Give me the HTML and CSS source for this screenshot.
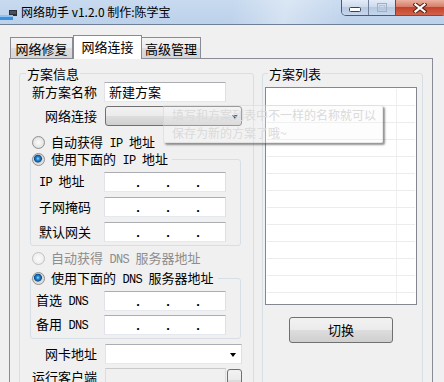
FILE: index.html
```html
<!DOCTYPE html>
<html lang="zh-CN">
<head>
<meta charset="utf-8">
<title>网络助手</title>
<link rel="stylesheet" href="styles.css">
</head>
<body>
<div class="titlebar">
  <svg class="appicon" width="18" height="16" viewBox="0 0 18 16">
    <rect x="9" y="5" width="8" height="6" fill="#2b2f36"/>
    <rect x="10" y="6" width="6" height="3" fill="#4a5260"/>
    <rect x="0" y="10" width="13" height="5" fill="#3d8fe0"/>
    <rect x="0" y="10" width="13" height="2" fill="#8cc4f5"/>
  </svg>
  <span class="title">网络助手 v1.2.0 制作:陈学宝</span>
  <div class="caption">
    <div class="cbtn min">
      <svg width="12" height="5" viewBox="0 0 12 5"><rect x="0.5" y="0.5" width="11" height="4" rx="1" fill="#fff" stroke="#34435a"/></svg>
    </div>
    <div class="cbtn max">
      <svg width="10" height="9" viewBox="0 0 10 9"><rect x="0.5" y="0.5" width="9" height="8" fill="none" stroke="#9fb0c6"/><rect x="2.5" y="2.5" width="5" height="4" fill="none" stroke="#b7c5d7"/></svg>
    </div>
    <div class="cbtn close">
      <svg width="14" height="10" viewBox="0 0 14 10"><path d="M2.5 1.5 L11.5 8.5 M11.5 1.5 L2.5 8.5" stroke="#5a2418" stroke-width="4.2" stroke-linecap="square"/><path d="M2.5 1.5 L11.5 8.5 M11.5 1.5 L2.5 8.5" stroke="#fff" stroke-width="2.2" stroke-linecap="square"/></svg>
    </div>
  </div>
</div>

<div class="client">
  <div class="tabs">
    <div class="tab t1">网络修复</div>
    <div class="tab active">网络连接</div>
    <div class="tab t3">高级管理</div>
  </div>
  <div class="page">
    <div class="group left">
      <div class="gtitle">方案信息</div>
      <div class="frow first">
        <span class="flabel">新方案名称</span>
        <div class="textbox name">新建方案</div>
      </div>
      <div class="frow">
        <span class="flabel">网络连接</span>
        <div class="combo ddlist"><span class="arrow"></span></div>
      </div>
      <div class="radioline r-ip"><span class="radio"></span><span>自动获得<span class="en"> IP </span>地址</span></div>
      <div class="subgroup ipgroup">
        <div class="gtitle rtitle"><span class="radio on"></span><span>使用下面的<span class="en"> IP </span>地址</span></div>
        <div class="ipgrid ip">
          <span class="iplabel"><span class="en">IP </span>地址</span>
          <div class="textbox ipbox"><span class="s0"></span><span class="dot">.</span><span class="s1"></span><span class="dot">.</span><span class="s1"></span><span class="dot">.</span></div>
          <span class="iplabel">子网掩码</span>
          <div class="textbox ipbox"><span class="s0"></span><span class="dot">.</span><span class="s1"></span><span class="dot">.</span><span class="s1"></span><span class="dot">.</span></div>
          <span class="iplabel">默认网关</span>
          <div class="textbox ipbox"><span class="s0"></span><span class="dot">.</span><span class="s1"></span><span class="dot">.</span><span class="s1"></span><span class="dot">.</span></div>
        </div>
      </div>
      <div class="radioline r-dns disabled"><span class="radio off"></span><span>自动获得<span class="en"> DNS </span>服务器地址</span></div>
      <div class="subgroup dnsgroup">
        <div class="gtitle rtitle"><span class="radio on"></span><span>使用下面的<span class="en"> DNS </span>服务器地址</span></div>
        <div class="ipgrid dns">
          <span class="iplabel">首选<span class="en"> DNS</span></span>
          <div class="textbox ipbox"><span class="s0"></span><span class="dot">.</span><span class="s1"></span><span class="dot">.</span><span class="s1"></span><span class="dot">.</span></div>
          <span class="iplabel">备用<span class="en"> DNS</span></span>
          <div class="textbox ipbox"><span class="s0"></span><span class="dot">.</span><span class="s1"></span><span class="dot">.</span><span class="s1"></span><span class="dot">.</span></div>
        </div>
      </div>
      <div class="frow mac">
        <span class="flabel">网卡地址</span>
        <div class="combo editable"><span class="arrow"></span></div>
      </div>
      <div class="frow last">
        <span class="flabel">运行客户端</span>
        <div class="textbox readonly"></div>
        <div class="browse">...</div>
      </div>
    </div>

    <div class="group right">
      <div class="gtitle">方案列表</div>
      <div class="listbox"><div class="listgrid"></div></div>
      <div class="button">切换</div>
    </div>
  </div>
</div>

<div class="tooltip">填写和方案列表中不一样的名称就可以<br>保存为新的方案了哦~</div>
</body>
</html>
```

FILE: styles.css
```css
* {
  box-sizing: border-box;
}

html, body {
  margin: 0;
  padding: 0;
}

body {
  width: 444px;
  height: 382px;
  overflow: hidden;
  position: relative;
  background: #f0f0f0;
  font-family: "Noto Sans CJK SC", "Noto Sans", sans-serif;
  font-size: 13px;
  color: #000;
}

.en {
  font-family: "Liberation Mono", "DejaVu Sans Mono", monospace;
  font-size: 12px;
  letter-spacing: -0.7px;
  white-space: pre;
}

/* ---------- title bar ---------- */
.titlebar {
  height: 25px;
  border-bottom: 1px solid #6f8096;
  display: flex;
  align-items: center;
  overflow: hidden;
  background:
    linear-gradient(100deg, rgba(255,255,255,0) 52%, rgba(255,255,255,0.35) 64%, rgba(255,255,255,0) 78%),
    linear-gradient(to bottom, #c8daef 0%, #bcd1ea 100%);
}

.appicon {
  flex: none;
  margin-right: 3px;
  margin-top: 1px;
}

.title {
  font-size: 12px;
  line-height: 16px;
  white-space: nowrap;
}

.caption {
  margin-left: auto;
  margin-right: -3px;
  align-self: flex-start;
  display: flex;
  height: 16px;
  border: 1px solid #4b5b72;
  border-top: none;
  border-radius: 0 0 5px 5px;
  overflow: hidden;
}

.cbtn {
  display: flex;
  align-items: center;
  justify-content: center;
  height: 100%;
}

.cbtn.min {
  width: 27px;
  padding-top: 4px;
  border-right: 1px solid #6e7f96;
  background: linear-gradient(to bottom, #e3ecf7 0%, #cddbec 45%, #b7cae2 50%, #c5d6ec 100%);
}

.cbtn.max {
  width: 27px;
  border-right: 1px solid #6e4a44;
  background: linear-gradient(to bottom, #e3ecf7 0%, #cddbec 45%, #b7cae2 50%, #c5d6ec 100%);
}

.cbtn.close {
  width: 50px;
  padding-right: 3px;
  background: linear-gradient(to bottom, #eab1a2 0%, #d87e68 45%, #c4432b 50%, #d2634a 100%);
}

/* ---------- tabs ---------- */
.client {
  padding-top: 10px;
}

.tabs {
  display: flex;
  align-items: flex-end;
  height: 23px;
  padding-left: 10px;
}

.tab {
  height: 21px;
  border: 1px solid #898c95;
  border-bottom: none;
  background: linear-gradient(to bottom, #f3f3f3 0%, #ebebeb 50%, #dddddd 51%, #d6d6d6 100%);
  display: flex;
  align-items: center;
  justify-content: center;
  line-height: 17px;
  padding-top: 1px;
}

.tab.t1 {
  width: 63px;
}

.tab.active {
  width: 69px;
  height: 24px;
  margin-bottom: -1px;
  background: #fff;
  position: relative;
  z-index: 1;
  padding-top: 0;
  padding-bottom: 3px;
}

.tab.t3 {
  width: 60px;
  margin-left: -1px;
}

.page {
  margin-left: 9px;
  width: 424px;
  height: 330px;
  border: 1px solid #898c95;
  background: #f0f0f0;
  display: flex;
  align-items: flex-start;
  gap: 8px;
  padding: 14px 9px 0;
}

/* ---------- group boxes ---------- */
.group {
  border: 1px solid #d5dfe5;
  border-radius: 3px;
  height: 320px;
}

.group.left {
  width: 235px;
}

.group.right {
  width: 161px;
}

.gtitle {
  width: fit-content;
  margin: -9px 0 0 6px;
  padding: 0 1px;
  height: 17px;
  line-height: 17px;
  background: #f0f0f0;
  white-space: nowrap;
}

.group.right .gtitle {
  margin-left: 5px;
}

.frow {
  display: flex;
  align-items: center;
  height: 20px;
  margin-top: 4px;
}

.frow.first {
  margin-top: 0;
}

.frow.mac {
  margin-top: 5px;
}

.frow.last {
  align-items: flex-start;
}

.flabel {
  width: 77px;
  margin-right: 7px;
  text-align: right;
  line-height: 20px;
  white-space: nowrap;
}

.frow.last .flabel {
  line-height: 17px;
}

.textbox {
  height: 20px;
  border: 1px solid;
  border-color: #abadb3 #dbdfe6 #e3e9ef #e2e3ea;
  background: #fff;
  line-height: 18px;
}

.textbox.name {
  width: 122px;
  padding-left: 4px;
}

.textbox.readonly {
  width: 121px;
  height: 22px;
  margin-left: 1px;
  background: #f0f0f0;
  border-color: #c9c9c9 #dcdcdc #dcdcdc #dcdcdc;
}

.browse {
  width: 15px;
  height: 22px;
  margin-left: 1px;
  margin-top: 1px;
  border: 1px solid #707070;
  border-radius: 3px;
  background: linear-gradient(to bottom, #f2f2f2 0%, #ebebeb 50%, #dddddd 51%, #cfcfcf 100%);
  font-size: 11px;
  line-height: 22px;
  text-align: center;
  overflow: hidden;
}

.combo {
  height: 20px;
  width: 137px;
  margin-left: 1px;
  display: flex;
  align-items: center;
  justify-content: flex-end;
}

.combo.ddlist {
  border: 1px solid #707070;
  border-radius: 3px;
  padding-right: 3px;
  background: linear-gradient(to bottom, #f2f2f2 0%, #ebebeb 50%, #dddddd 51%, #cfcfcf 100%);
}

.combo.editable {
  border: 1px solid;
  border-color: #abadb3 #dbdfe6 #e3e9ef #e2e3ea;
  background: #fff;
  padding-right: 5px;
}

.arrow {
  width: 0;
  height: 0;
  border-left: 3.5px solid transparent;
  border-right: 3.5px solid transparent;
  border-top: 4px solid #000;
  margin-top: 1px;
}

/* ---------- radios ---------- */
.radioline {
  display: flex;
  align-items: center;
  gap: 6px;
  height: 17px;
  line-height: 17px;
  margin-left: 12px;
  white-space: nowrap;
}

.radioline.r-ip {
  margin-top: 8px;
}

.radioline.r-dns {
  margin-top: 4px;
}

.disabled {
  color: #8d8d8d;
}

.radio {
  flex: none;
  width: 13px;
  height: 13px;
  border-radius: 50%;
  border: 1px solid #8e8f8f;
  background: radial-gradient(circle at 50% 50%, #fdfdfd 0, #e8e8e8 55%, #cfcfcf 100%);
}

.radio.on {
  background: radial-gradient(circle at 45% 42%, #9fe0ff 0, #2c8fd8 1.5px, #0e4e8a 3.6px, #d6d6d6 4.3px, #f6f6f6 100%);
}

.radio.off {
  border-color: #c2c2c2;
  background: radial-gradient(circle at 50% 50%, #fbfbfb 0, #f0f0f0 60%, #e4e4e4 100%);
}

.subgroup {
  margin-left: 10px;
  width: 211px;
  border: 1px solid #d5dfe5;
  border-radius: 3px;
  padding-bottom: 3px;
}

.subgroup.ipgroup {
  margin-top: 8px;
}

.subgroup.dnsgroup {
  margin-top: 11px;
}

.rtitle {
  display: flex;
  align-items: center;
  gap: 6px;
  margin-left: 1px;
  padding: 0 4px 0 0;
}

.ipgrid {
  display: grid;
  grid-template-columns: 65px 122px;
  grid-auto-rows: 20px;
  row-gap: 5px;
  margin-top: 4px;
  padding-left: 8px;
  align-items: center;
}

.ipgrid.dns {
  grid-template-columns: 68px 122px;
  row-gap: 4px;
  padding-left: 5px;
}

.iplabel {
  line-height: 20px;
  white-space: nowrap;
}

.ipbox {
  display: flex;
  align-items: flex-end;
}

.ipbox .s0 {
  width: 31px;
}

.ipbox .s1 {
  width: 26px;
}

.ipbox .dot {
  width: 4px;
  text-align: center;
  font-family: "Liberation Sans", sans-serif;
  font-weight: bold;
  font-size: 13px;
  line-height: 16px;
}

/* ---------- list ---------- */
.listbox {
  width: 152px;
  height: 218px;
  margin: 5px 0 0 2px;
  border: 1px solid #828790;
  background: #fff;
  padding: 1px;
}

.listgrid {
  height: 100%;
  background:
    linear-gradient(to right, rgba(0,0,0,0) 129px, #efefef 129px, #efefef 130px, rgba(0,0,0,0) 130px),
    repeating-linear-gradient(to bottom, rgba(0,0,0,0) 0, rgba(0,0,0,0) 16px, #ececec 16px, #ececec 17px);
}

.button {
  width: 104px;
  height: 26px;
  margin: 12px 0 0 26px;
  border: 1px solid #707070;
  border-radius: 3px;
  background: linear-gradient(to bottom, #f2f2f2 0%, #ebebeb 50%, #dddddd 51%, #cfcfcf 100%);
  display: flex;
  align-items: center;
  justify-content: center;
  line-height: 18px;
}

/* ---------- tooltip (fading in, overlays the form) ---------- */
.tooltip {
  position: absolute;
  left: 163px;
  top: 105px;
  width: 220px;
  height: 38px;
  padding: 0 8px;
  border: 1px solid rgba(200, 200, 200, 0.4);
  border-radius: 2px;
  background: rgba(250, 250, 250, 0.3);
  box-shadow: 2px 2px 2px rgba(60, 60, 60, 0.55);
  font-size: 12px;
  line-height: 18px;
  color: #dadada;
  white-space: nowrap;
}
```
